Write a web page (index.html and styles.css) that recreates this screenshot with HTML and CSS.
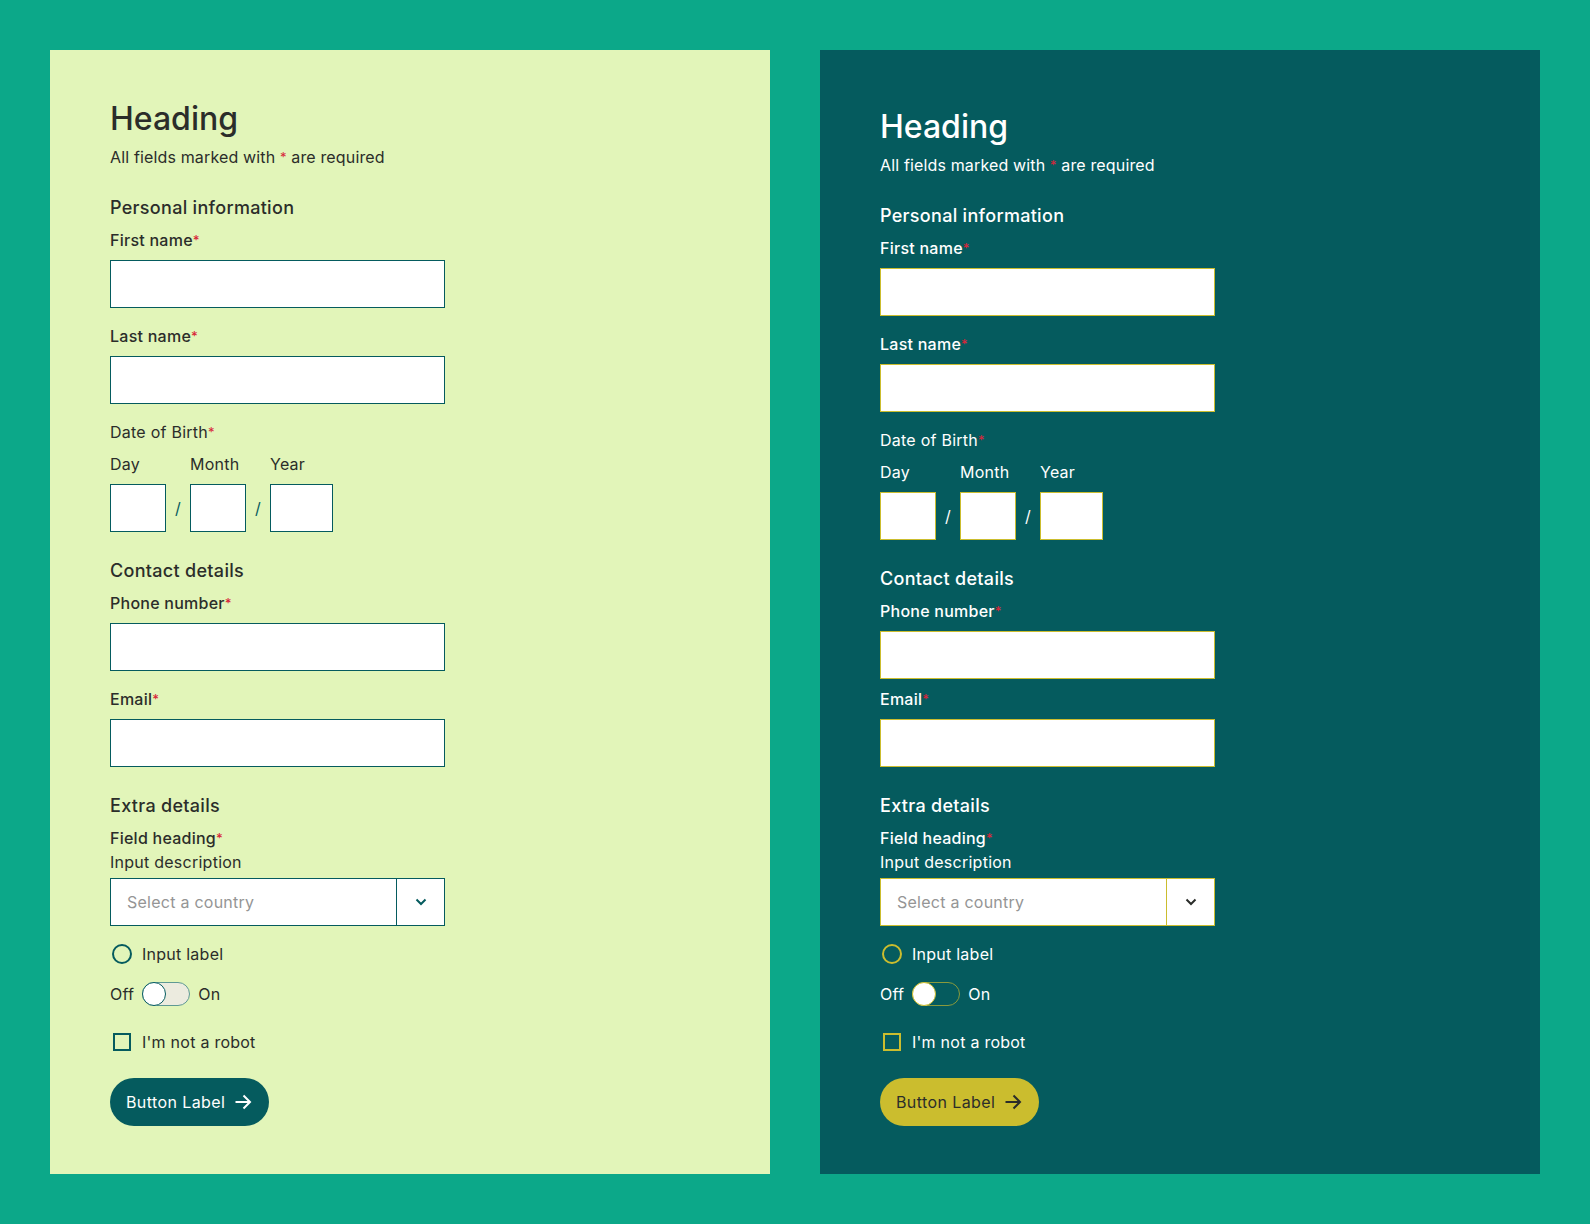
FILE: index.html
```html
<!DOCTYPE html>
<html lang="en">
<head>
    <meta charset="UTF-8">
    <meta name="viewport" content="width=device-width, initial-scale=1.0">
    <title>Form theme preview</title>
    <link rel="stylesheet" href="styles.css">
</head>
<body>
    <main class="page">

        <!-- light theme -->
        <form class="panel panel-light">
            <h1 class="title">Heading</h1>
            <p class="hint">All fields marked with <span class="req">*</span> are required</p>

            <section class="group">
                <h2 class="group-title">Personal information</h2>
                <div class="field">
                    <label class="label" for="l_first">First name<span class="req">*</span></label>
                    <input class="text-input" type="text" id="l_first">
                </div>
                <div class="field">
                    <label class="label" for="l_last">Last name<span class="req">*</span></label>
                    <input class="text-input" type="text" id="l_last">
                </div>
                <div class="field">
                    <span class="label label-plain">Date of Birth<span class="req">*</span></span>
                    <div class="date">
                        <div class="date-part">
                            <label class="date-label" for="l_day">Day</label>
                            <input class="text-input date-input" type="text" id="l_day">
                        </div>
                        <span class="slash">/</span>
                        <div class="date-part">
                            <label class="date-label" for="l_month">Month</label>
                            <input class="text-input date-input" type="text" id="l_month">
                        </div>
                        <span class="slash">/</span>
                        <div class="date-part">
                            <label class="date-label" for="l_year">Year</label>
                            <input class="text-input date-input date-year" type="text" id="l_year">
                        </div>
                    </div>
                </div>
            </section>

            <section class="group">
                <h2 class="group-title">Contact details</h2>
                <div class="field">
                    <label class="label" for="l_phone">Phone number<span class="req">*</span></label>
                    <input class="text-input" type="tel" id="l_phone">
                </div>
                <div class="field field-email">
                    <label class="label" for="l_email">Email<span class="req">*</span></label>
                    <input class="text-input" type="email" id="l_email">
                </div>
            </section>

            <section class="group">
                <h2 class="group-title">Extra details</h2>
                <div class="field">
                    <label class="label label-tight" for="l_country">Field heading<span class="req">*</span></label>
                    <p class="description">Input description</p>
                    <div class="select">
                        <select class="select-input" id="l_country">
                            <option>Select a country</option>
                        </select>
                        <span class="select-btn">
                            <svg width="12" height="8" viewBox="0 0 12 8"><path d="M1.5 1.5 6 6l4.5-4.5" fill="none" stroke="currentColor" stroke-width="2"/></svg>
                        </span>
                    </div>
                </div>

                <label class="option">
                    <input class="radio" type="radio" name="l_choice">
                    Input label
                </label>
                <div class="option">
                    <span>Off</span>
                    <span class="switch"><span class="knob"></span></span>
                    <span>On</span>
                </div>
                <label class="option option-check">
                    <input class="check" type="checkbox">
                    I'm not a robot
                </label>
            </section>

            <button type="button" class="btn">
                Button Label
                <svg width="20" height="20" viewBox="0 0 20 20"><path d="M2.5 10h14M10.5 3.5 17 10l-6.5 6.5" fill="none" stroke="currentColor" stroke-width="2"/></svg>
            </button>
        </form>

        <!-- dark theme -->
        <form class="panel panel-dark">
            <h1 class="title">Heading</h1>
            <p class="hint">All fields marked with <span class="req">*</span> are required</p>

            <section class="group">
                <h2 class="group-title">Personal information</h2>
                <div class="field">
                    <label class="label" for="d_first">First name<span class="req">*</span></label>
                    <input class="text-input" type="text" id="d_first">
                </div>
                <div class="field">
                    <label class="label" for="d_last">Last name<span class="req">*</span></label>
                    <input class="text-input" type="text" id="d_last">
                </div>
                <div class="field">
                    <span class="label label-plain">Date of Birth<span class="req">*</span></span>
                    <div class="date">
                        <div class="date-part">
                            <label class="date-label" for="d_day">Day</label>
                            <input class="text-input date-input" type="text" id="d_day">
                        </div>
                        <span class="slash">/</span>
                        <div class="date-part">
                            <label class="date-label" for="d_month">Month</label>
                            <input class="text-input date-input" type="text" id="d_month">
                        </div>
                        <span class="slash">/</span>
                        <div class="date-part">
                            <label class="date-label" for="d_year">Year</label>
                            <input class="text-input date-input date-year" type="text" id="d_year">
                        </div>
                    </div>
                </div>
            </section>

            <section class="group">
                <h2 class="group-title">Contact details</h2>
                <div class="field">
                    <label class="label" for="d_phone">Phone number<span class="req">*</span></label>
                    <input class="text-input" type="tel" id="d_phone">
                </div>
                <div class="field field-email">
                    <label class="label" for="d_email">Email<span class="req">*</span></label>
                    <input class="text-input" type="email" id="d_email">
                </div>
            </section>

            <section class="group">
                <h2 class="group-title">Extra details</h2>
                <div class="field">
                    <label class="label label-tight" for="d_country">Field heading<span class="req">*</span></label>
                    <p class="description">Input description</p>
                    <div class="select">
                        <select class="select-input" id="d_country">
                            <option>Select a country</option>
                        </select>
                        <span class="select-btn">
                            <svg width="12" height="8" viewBox="0 0 12 8"><path d="M1.5 1.5 6 6l4.5-4.5" fill="none" stroke="currentColor" stroke-width="2"/></svg>
                        </span>
                    </div>
                </div>

                <label class="option">
                    <input class="radio" type="radio" name="d_choice">
                    Input label
                </label>
                <div class="option">
                    <span>Off</span>
                    <span class="switch"><span class="knob"></span></span>
                    <span>On</span>
                </div>
                <label class="option option-check">
                    <input class="check" type="checkbox">
                    I'm not a robot
                </label>
            </section>

            <button type="button" class="btn">
                Button Label
                <svg width="20" height="20" viewBox="0 0 20 20"><path d="M2.5 10h14M10.5 3.5 17 10l-6.5 6.5" fill="none" stroke="currentColor" stroke-width="2"/></svg>
            </button>
        </form>

    </main>
</body>
</html>
```

FILE: styles.css
```css
body {
    margin: 0;
    background-color: #0ca889;
    font-family: 'Inter', 'Liberation Sans', sans-serif;
    color: #2b2d2a;
}

.page {
    display: flex;
    gap: 50px;
    padding: 50px;
}

.panel {
    width: 720px;
    box-sizing: border-box;
    padding: 49px 60px 48px;
    font-size: 16px;
    line-height: 24px;
    letter-spacing: 0.25px;
}

.panel-light {
    background-color: #e2f5b9;
}

.panel-dark {
    background-color: #055b5e;
    color: #fff;
    padding-top: 57px;
}

.title {
    margin: 0 0 6px;
    font-size: 32px;
    line-height: 40px;
    font-weight: 500;
    letter-spacing: 0;
}

.hint {
    margin: 0;
    letter-spacing: 0.15px;
}

.req {
    color: #d8263a;
    font-size: 13px;
    vertical-align: top;
}

.group {
    margin-top: 27px;
}

.group-title {
    margin: 0 0 8px;
    font-size: 18px;
    line-height: 24px;
    font-weight: 500;
    letter-spacing: 0.3px;
}

.field + .field {
    margin-top: 16px;
}

.panel-dark .field-email {
    margin-top: 8px;
}

.label {
    display: block;
    margin-bottom: 8px;
    font-weight: 500;
}

.label-plain {
    font-weight: 400;
}

.label-tight {
    margin-bottom: 0;
}

.description {
    margin: 0 0 4px;
}

.text-input {
    display: block;
    width: 335px;
    height: 48px;
    box-sizing: border-box;
    margin: 0;
    padding: 0 16px;
    border: 1px solid #055b5e;
    border-radius: 0;
    background-color: #fff;
    font: inherit;
}

/* date of birth */
.date {
    display: flex;
    align-items: flex-end;
}

.date-label {
    display: block;
    margin-bottom: 8px;
}

.date-input {
    width: 56px;
}

.date-year {
    width: 63px;
}

.slash {
    width: 24px;
    line-height: 48px;
    text-align: center;
    color: #055b5e;
}

/* select */
.select {
    display: flex;
    width: 335px;
    height: 48px;
    box-sizing: border-box;
    border: 1px solid #055b5e;
    background-color: #fff;
}

.select-input {
    flex: 1;
    appearance: none;
    margin: 0;
    padding: 0 16px;
    border: 0;
    border-right: 1px solid #055b5e;
    border-radius: 0;
    background: transparent;
    font: inherit;
    letter-spacing: 0.25px;
    color: #959595;
}

.select-btn {
    width: 47px;
    display: flex;
    align-items: center;
    justify-content: center;
    color: #055b5e;
}

/* radio, switch, checkbox */
.option {
    display: flex;
    align-items: center;
    gap: 8px;
    margin-top: 16px;
}

.option-check {
    margin-top: 24px;
}

.radio {
    appearance: none;
    width: 20px;
    height: 20px;
    margin: 2px;
    box-sizing: border-box;
    border: 2px solid #055b5e;
    border-radius: 50%;
    background: transparent;
}

.check {
    appearance: none;
    width: 18px;
    height: 18px;
    margin: 3px;
    box-sizing: border-box;
    border: 2px solid #055b5e;
    border-radius: 0;
    background: transparent;
}

.switch {
    display: flex;
    align-items: center;
    width: 48px;
    height: 24px;
    box-sizing: border-box;
    border: 1.5px solid #5f9994;
    border-radius: 12px;
    background-color: #ecebdf;
}

.knob {
    width: 24px;
    height: 24px;
    margin-left: -1.5px;
    box-sizing: border-box;
    border: 1.5px solid #055b5e;
    border-radius: 50%;
    background-color: #fff;
}

/* button */
.btn {
    display: flex;
    align-items: center;
    gap: 8px;
    width: max-content;
    height: 48px;
    margin-top: 24px;
    padding: 0 16px;
    border: 0;
    border-radius: 24px;
    background-color: #055b5e;
    color: #fff;
    font: inherit;
    letter-spacing: 0.4px;
    cursor: pointer;
}

/* dark theme overrides */
.panel-dark .text-input,
.panel-dark .select {
    border-color: #cbbd2e;
}

.panel-dark .select-input {
    border-right-color: #cbbd2e;
}

.panel-dark .select-btn {
    color: #2b2d2a;
}

.panel-dark .slash {
    color: #fff;
}

.panel-dark .radio,
.panel-dark .check {
    border-color: #cbbd2e;
}

.panel-dark .switch {
    border-color: #8a9a3c;
    background-color: transparent;
}

.panel-dark .knob {
    border-color: #cbbd2e;
}

.panel-dark .btn {
    background-color: #cbbd2e;
    color: #2b2d2a;
}
```
